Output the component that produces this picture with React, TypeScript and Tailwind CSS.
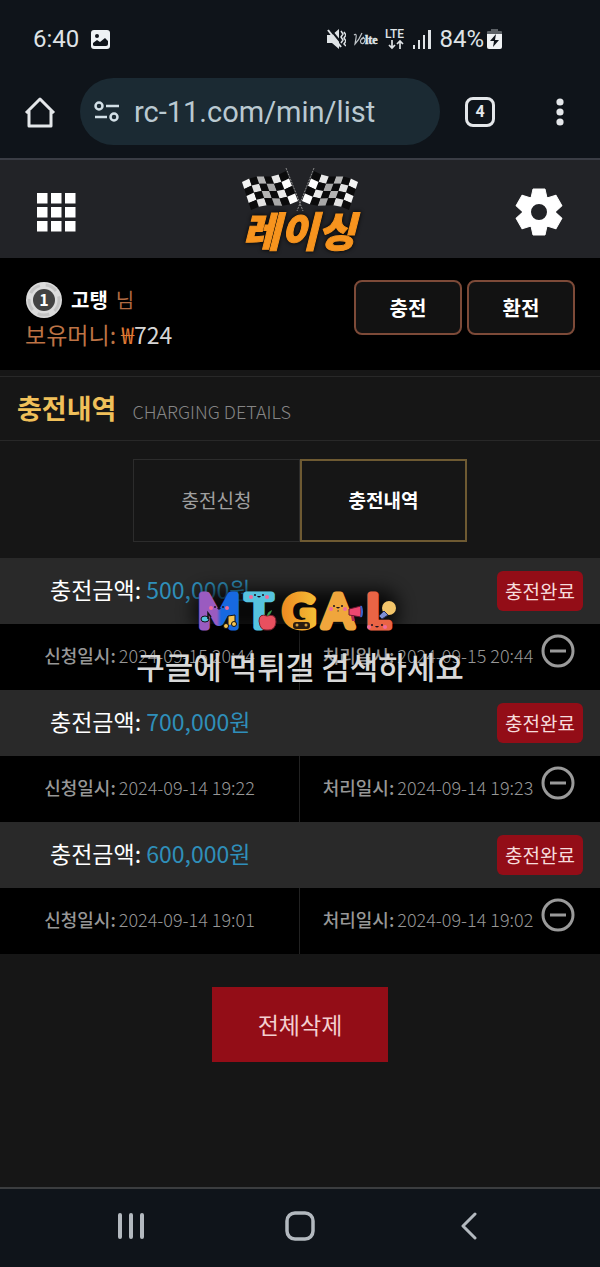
import React, { useState } from 'react';

interface ChargeRecord {
  id: number;
  amount: string;
  requestedAt: string;
  processedAt: string;
}

const records: ChargeRecord[] = [
  { id: 1, amount: '500,000', requestedAt: '2024-09-15 20:44', processedAt: '2024-09-15 20:44' },
  { id: 2, amount: '700,000', requestedAt: '2024-09-14 19:22', processedAt: '2024-09-14 19:23' },
  { id: 3, amount: '600,000', requestedAt: '2024-09-14 19:01', processedAt: '2024-09-14 19:02' },
];

function StatusBar() {
  return (
    <div className="flex h-[78px] items-center justify-between pl-[33px] pr-[98px] text-2xl text-[#dfe3e6]">
      <div className="flex items-center gap-3">
        <span>6:40</span>
        <svg width="19" height="19" viewBox="0 0 19 19" aria-hidden="true">
          <rect width="19" height="19" rx="3" fill="#eef2f5" />
          <circle cx="6" cy="6" r="2" fill="#10151c" />
          <path d="M2 15v-2l4-3 3 2 5-4 3 3v3q0 2-2 2H4q-2 0-2-1z" fill="#10151c" />
        </svg>
      </div>
      <div className="flex items-center gap-[7px]">
        <svg width="19" height="20" viewBox="0 0 19 20" fill="none" stroke="#dfe3e6" aria-hidden="true">
          <path d="M0 6h5l7-6v20l-7-6H0z" fill="#dfe3e6" stroke="none" />
          <path d="M3 0l13 16" stroke="#10151c" strokeWidth="2" />
          <path d="M1 1l13 17" strokeWidth="2" />
          <path d="M14 2l2 3-2 3 2 3-2 3M17 3l2 3-2 3 2 3-2 3 2 2" strokeWidth="1.500" />
        </svg>
        <svg width="26" height="14" viewBox="0 0 26 14" className="overflow-visible" aria-label="VoLTE">
          <path d="M1 3q3-2 2 3l-1 6Q6 8 9 1M11 5q-5 3-3 6 3 2 4-3 0-3-3-1" fill="none" stroke="#bfc4c8" strokeWidth="1.200" />
          <text x="12" y="12" fontSize="12" fontWeight="700" fill="#dfe3e6" stroke="#dfe3e6" strokeWidth="0.500" fontFamily="Liberation Serif, serif">
            lte
          </text>
        </svg>
        <svg width="20" height="21" viewBox="0 0 20 21" className="overflow-visible" aria-label="LTE">
          <text x="-1" y="9" fontSize="12" fontWeight="500" fill="#dfe3e6" fontFamily="Roboto, sans-serif">
            LTE
          </text>
          <path d="M6 11v8M3 16l3 3 3-3M14 20v-8M11 15l3-3 3 3" fill="none" stroke="#dfe3e6" strokeWidth="1.700" />
        </svg>
        <svg width="19" height="19" viewBox="0 0 19 19" fill="#dfe3e6" aria-hidden="true">
          <rect x="0" y="15" width="2" height="4" />
          <rect x="5" y="10" width="2" height="9" />
          <rect x="10" y="5" width="2" height="14" />
          <rect x="15" y="0" width="3" height="19" />
        </svg>
        <div className="flex items-center gap-[3px]">
          <span>84%</span>
          <svg width="15" height="20" viewBox="0 0 15 20" aria-hidden="true">
            <path d="M4 0h7v2h3q1 0 1 1v3H0V3q0-1 1-1h3z" fill="#5c6166" />
            <path d="M0 5h15v13q0 2-2 2H2q-2 0-2-2z" fill="#f0f3f5" />
            <path d="M9 5l-6 7h4l-1 6 6-7H8z" fill="#10151c" />
          </svg>
        </div>
      </div>
    </div>
  );
}

function BrowserBar() {
  return (
    <div className="flex h-[82px] items-start border-b-2 border-[#3a3d45] pl-6">
      <button type="button" aria-label="홈" className="flex h-[67px] items-center">
        <svg width="32" height="32" viewBox="0 0 32 32" fill="none" stroke="#e4e7ea" strokeWidth="3" strokeLinejoin="round" aria-hidden="true">
          <path d="M2 17L16 3l14 14M5 15v15h22V15" />
        </svg>
      </button>
      <div className="ml-6 flex h-[67px] min-w-0 flex-1 items-center gap-[14px] rounded-full bg-[#1b2a33] pl-[14px]">
        <svg width="26" height="22" viewBox="0 0 26 22" fill="none" stroke="#d3e0e7" strokeWidth="2.500" className="shrink-0" aria-hidden="true">
          <circle cx="5" cy="5" r="3.500" />
          <path d="M12 5h13M1 16h12" />
          <circle cx="20" cy="16" r="3.500" />
        </svg>
        <input
          type="text"
          aria-label="주소"
          defaultValue="rc-11.com/min/list"
          className="w-full min-w-0 bg-transparent text-[29px] leading-9 text-[#bac9d1] outline-none"
        />
      </div>
      <button type="button" aria-label="탭 4개" className="ml-[25px] flex h-[67px] items-center">
        <span className="flex size-[30px] items-center justify-center rounded-lg border-[3px] border-[#e4e7ea] text-base font-bold text-[#e4e7ea]">
          4
        </span>
      </button>
      <button type="button" aria-label="더보기" className="mr-6 ml-[49px] flex h-[67px] w-8 items-center justify-center">
        <svg width="8" height="28" viewBox="0 0 8 28" fill="#e4e7ea" aria-hidden="true">
          <circle cx="4" cy="4" r="3.600" />
          <circle cx="4" cy="14" r="3.600" />
          <circle cx="4" cy="24" r="3.600" />
        </svg>
      </button>
    </div>
  );
}

const FLAG_COLS = 6;
const FLAG_ROWS = 4;
const shades = ['#f4f4f4', '#e2e2e2', '#b5b5b5', '#a8a8a8', '#e9e9e9', '#ffffff'];

// point on the waving flag, u and v run from 0 to 1
function flagPoint(u: number, v: number) {
  const x = 7 + u * 44 + v * 9 + u * v * 3;
  const y = 22 - u * 11 + v * 28 + u * v * 2 - Math.sin(u * Math.PI * 2) * 2;
  return `${x.toFixed(1)},${y.toFixed(1)}`;
}

function Flag() {
  const cells = [];
  for (let r = 0; r < FLAG_ROWS; r++) {
    for (let c = 0; c < FLAG_COLS; c++) {
      const u = c / FLAG_COLS;
      const v = r / FLAG_ROWS;
      const u2 = (c + 1) / FLAG_COLS;
      const v2 = (r + 1) / FLAG_ROWS;
      cells.push(
        <polygon
          key={`${r}-${c}`}
          points={[flagPoint(u, v), flagPoint(u2, v), flagPoint(u2, v2), flagPoint(u, v2)].join(' ')}
          fill={(r + c) % 2 === 0 ? shades[c] : '#0b0b0c'}
        />
      );
    }
  }
  return (
    <g>
      {cells}
      <path d="M51 8l17 43" stroke="#8b8b8b" strokeWidth="1" strokeDasharray="2 1" />
    </g>
  );
}

function Logo() {
  return (
    <svg width="130" height="98" viewBox="0 0 130 98" className="overflow-visible" role="img" aria-label="레이싱">
      <Flag />
      <g transform="matrix(-1 0 0 1 130 0)">
        <Flag />
      </g>
      <text
        x="64"
        y="87"
        textAnchor="middle"
        fontFamily="Noto Sans CJK KR, sans-serif"
        fontSize="41"
        fontWeight="900"
        fontStyle="italic"
        fill="#f7941e"
        stroke="#f7941e"
        strokeWidth="1"
        className="drop-shadow-[0_0_2px_#000]"
      >
        레이싱
      </text>
    </svg>
  );
}

function Header() {
  return (
    <header className="grid h-[98px] grid-cols-3 items-center bg-[#222327] px-9 pt-[6px]">
      <button type="button" aria-label="메뉴" className="justify-self-start">
        <svg width="40" height="40" viewBox="0 0 40 40" fill="#fff" aria-hidden="true">
          {[1, 15, 29].map((y) => [1, 15, 29].map((x) => <rect key={`${x}-${y}`} x={x} y={y} width="10.500" height="10.500" />))}
        </svg>
      </button>
      <div className="-mt-[6px] justify-self-center">
        <Logo />
      </div>
      <button type="button" aria-label="설정" className="justify-self-end">
        <svg width="50" height="50" viewBox="-25 -25 50 50" aria-hidden="true">
          <g fill="#fff" stroke="#fff" strokeWidth="1" strokeLinejoin="round">
            {[0, 60, 120, 180, 240, 300].map((deg) => (
              <path key={deg} d="M-8-14L-6-23H6L8-14z" transform={`rotate(${deg})`} />
            ))}
          </g>
          <circle r="12.500" fill="none" stroke="#fff" strokeWidth="9" />
        </svg>
      </button>
    </header>
  );
}

function UserInfo() {
  const actionClass = 'h-[55px] w-[108px] rounded-lg border-2 border-[#7d4a38] bg-[#121212] text-xl font-bold text-white';

  return (
    <section className="flex justify-between bg-black px-[25px] py-[22px]">
      <div>
        <div className="flex h-10 items-center gap-2 text-xl">
          <svg width="38" height="38" viewBox="0 0 38 38" aria-hidden="true">
            <circle cx="19" cy="19" r="18" fill="#dcdcdc" />
            <circle cx="19" cy="19" r="15" fill="none" stroke="#c4c4c4" strokeWidth="3" strokeDasharray="12 6" />
            <circle cx="19" cy="19" r="11" fill="#424242" />
            <text x="19" y="25" textAnchor="middle" fontSize="16" fontWeight="700" fill="#fff">
              1
            </text>
          </svg>
          <strong className="text-white">고탱</strong>
          <span className="text-[#b06a42]">님</span>
        </div>
        <p className="text-[23px] leading-7 text-[#bd7345]">
          보유머니: <span className="text-[#e07b35]">₩</span>
          <span className="text-[#d6d6d6]">724</span>
        </p>
      </div>
      <div className="flex gap-[5px]">
        <button type="button" className={actionClass}>충전</button>
        <button type="button" className={actionClass}>환전</button>
      </div>
    </section>
  );
}

function Watermark() {
  return (
    <div className="pointer-events-none absolute inset-x-0 top-0 flex flex-col items-center pt-6">
      <svg width="240" height="60" viewBox="0 0 240 60" className="overflow-visible" role="img" aria-label="MTGAL">
        <defs>
          <linearGradient id="letterM">
            <stop offset="0.45" stopColor="#9a5bc0" />
            <stop offset="0.55" stopColor="#1769e0" />
          </linearGradient>
          <linearGradient id="letterG">
            <stop offset="0" stopColor="#ee8b22" />
            <stop offset="1" stopColor="#f3bd35" />
          </linearGradient>
          <filter id="halo" x="-30%" y="-80%" width="160%" height="260%">
            <feGaussianBlur stdDeviation="9" />
          </filter>
        </defs>
        <rect x="14" y="8" width="204" height="42" rx="16" fill="#000" opacity="0.8" filter="url(#halo)" />
        <g fontFamily="Lato, sans-serif" fontWeight="400" fontSize="44" strokeWidth="7" strokeLinejoin="round" strokeLinecap="round" textAnchor="middle">
          <text x="39" y="45" fill="url(#letterM)" stroke="url(#letterM)">M</text>
          <text x="79" y="45" fill="#56c3df" stroke="#56c3df">T</text>
          <text x="119" y="45" fill="url(#letterG)" stroke="url(#letterG)">G</text>
          <text x="158" y="45" fill="#f0a63c" stroke="#f0a63c">A</text>
          <text x="198" y="45" fill="#ea6445" stroke="#ea6445">L</text>
        </g>
        {/* faces */}
        <g fill="#1b1020">
          <circle cx="35" cy="25" r="1" />
          <circle cx="43" cy="25" r="1" />
          <path d="M37 26h4q-2 3-4 0z" />
          <circle cx="75" cy="13" r="1" />
          <circle cx="83" cy="13" r="1" />
          <path d="M77 14h4q-2 3-4 0z" />
          <circle cx="154" cy="24" r="1" />
          <circle cx="162" cy="24" r="1" />
          <path d="M156 25h4q-2 3-4 0z" />
          <circle cx="192" cy="43" r="1" />
          <circle cx="202" cy="43" r="1" />
          <path d="M195 44h4q-2 3-4 0z" />
        </g>
        <g fill="#f06b9b">
          <circle cx="31" cy="26" r="2" />
          <circle cx="47" cy="26" r="2" />
          <circle cx="71" cy="15" r="2" />
          <circle cx="87" cy="15" r="2" />
          <circle cx="151" cy="27" r="2" />
          <circle cx="165" cy="27" r="2" />
          <circle cx="189" cy="45" r="2" />
          <circle cx="205" cy="45" r="2" />
        </g>
        {/* music notes */}
        <ellipse cx="25" cy="37" rx="4" ry="3" fill="#56c3df" stroke="#111" />
        <path d="M28 37V31l3 4" fill="none" stroke="#111" strokeWidth="1.500" />
        <path d="M48 43V34l7-1v9" fill="#f5c451" stroke="#111" />
        <circle cx="46" cy="44" r="2.500" fill="#f5c451" stroke="#111" />
        <circle cx="54" cy="42" r="2.500" fill="#f5c451" stroke="#111" />
        {/* apple */}
        <path d="M87 34q-8-3-8 5 1 10 8 9 8 1 9-8 0-9-9-6z" fill="#e8505f" stroke="#7c1f2d" />
        <path d="M87 34q0-4 5-6-1 5-5 6z" fill="#3f9b4c" />
        {/* gamepad */}
        <rect x="113" y="40" width="17" height="7" rx="3" fill="#2a1c10" />
        <circle cx="117" cy="43" r="1.500" fill="#d09a3a" />
        <circle cx="126" cy="43" r="1.500" fill="#d09a3a" />
        {/* megaphone */}
        <path d="M169 27l12-3v11l-12-2z" fill="#ee4770" stroke="#6b1530" />
        <path d="M181 24q2 6 0 11" fill="#3b63c9" stroke="#3b63c9" strokeWidth="2" />
        <path d="M171 34l1 5h3l-1-5" fill="#b6294d" />
        {/* bulb */}
        <circle cx="209" cy="26" r="7" fill="#f3c56a" />
        <path d="M204 29l-5 5 3 3 6-4z" fill="#7f8fd4" stroke="#2b2f5a" />
      </svg>
      <p className="mt-1 text-[31px] leading-10 font-medium text-[#d8d8d8]">구글에 먹튀갤 검색하세요</p>
    </div>
  );
}

function RecordItem({ record, onDelete }: { record: ChargeRecord; onDelete: (id: number) => void }) {
  return (
    <li>
      <div className="flex h-[66px] items-center justify-between bg-[#292929] pr-[17px] pl-[50px]">
        <p className="pb-1 text-[23px] leading-8 text-white">
          충전금액: <span className="text-[#2f8fba]">{record.amount}원</span>
        </p>
        <span className="flex h-10 w-[86px] items-center justify-center rounded-md bg-[#930d17] text-[19px] text-[#f6dcdc]">
          충전완료
        </span>
      </div>
      <div className="grid h-[66px] grid-cols-2 bg-black text-lg text-[#979797]">
        <p className="flex items-center justify-center gap-[3px] border-r border-[#222222] pb-1">
          <span className="font-medium">신청일시:</span>
          <time className="font-light">{record.requestedAt}</time>
        </p>
        <div className="flex items-center justify-center gap-2 pr-[2px] pb-1">
          <p className="flex items-center gap-[3px]">
            <span className="font-medium">처리일시:</span>
            <time className="font-light">{record.processedAt}</time>
          </p>
          <button type="button" aria-label="삭제" className="mb-2" onClick={() => onDelete(record.id)}>
            <svg width="34" height="34" viewBox="0 0 34 34" fill="none" stroke="#9a9a9a" strokeWidth="3" aria-hidden="true">
              <circle cx="17" cy="17" r="15" />
              <path d="M9 17h16" />
            </svg>
          </button>
        </div>
      </div>
    </li>
  );
}

function SystemNav() {
  return (
    <nav className="grid h-20 grid-cols-3 items-center border-t-2 border-[#3b3d3f] bg-[#0f141a] px-[47px] pb-1">
      <button type="button" aria-label="최근 앱" className="justify-self-center">
        <svg width="26" height="28" viewBox="0 0 26 28" stroke="#b3b9bf" strokeWidth="4" strokeLinecap="round" aria-hidden="true">
          <path d="M2 3v22M13 3v22M24 3v22" />
        </svg>
      </button>
      <button type="button" aria-label="홈 화면" className="justify-self-center">
        <svg width="30" height="30" viewBox="0 0 30 30" fill="none" stroke="#b3b9bf" strokeWidth="3.500" aria-hidden="true">
          <rect x="2" y="2" width="26" height="26" rx="8" />
        </svg>
      </button>
      <button type="button" aria-label="뒤로" className="justify-self-center">
        <svg width="16" height="28" viewBox="0 0 16 28" fill="none" stroke="#b3b9bf" strokeWidth="3" strokeLinecap="round" strokeLinejoin="round" aria-hidden="true">
          <path d="M14 2L2 14l12 12" />
        </svg>
      </button>
    </nav>
  );
}

export default function App() {
  const [items, setItems] = useState(records);
  const [tab, setTab] = useState<'request' | 'history'>('history');

  const handleDelete = (id: number) => setItems(items.filter((item) => item.id !== id));

  const tabClass = (active: boolean) =>
    active
      ? 'h-[83px] w-[167px] border-2 border-[#6e5a32] font-bold text-white'
      : 'h-[83px] w-[167px] border border-[#2c2c2c] text-[#a0a0a0]';

  return (
    <div className="flex min-h-screen flex-col bg-[#161616] font-['Noto_Sans_CJK_KR',sans-serif]">
      <div className="bg-[#0f141a] font-['Roboto',sans-serif]">
        <StatusBar />
        <BrowserBar />
      </div>
      <Header />
      <main className="flex-1">
        <UserInfo />

        <div className="mt-[6px] flex h-[65px] items-center gap-4 border-t border-b border-[#282828] pl-[17px]">
          <h1 className="text-[27px] font-bold text-[#f0c05a]">충전내역</h1>
          <span className="pt-1 text-lg font-light text-[#858585]">CHARGING DETAILS</span>
        </div>

        <div role="tablist" className="mt-[18px] mb-4 flex justify-center text-[19px]">
          <button type="button" role="tab" aria-selected={tab === 'request'} className={tabClass(tab === 'request')} onClick={() => setTab('request')}>
            충전신청
          </button>
          <button type="button" role="tab" aria-selected={tab === 'history'} className={tabClass(tab === 'history')} onClick={() => setTab('history')}>
            충전내역
          </button>
        </div>

        <div className="relative">
          <ul>
            {items.map((item) => (
              <RecordItem key={item.id} record={item} onDelete={handleDelete} />
            ))}
          </ul>
          <Watermark />
        </div>

        <div className="mt-[33px] flex justify-center">
          <button type="button" className="h-[75px] w-[176px] bg-[#930d17] text-[23px] text-[#f3cfd0]" onClick={() => setItems([])}>
            전체삭제
          </button>
        </div>
      </main>
      <SystemNav />
    </div>
  );
}
